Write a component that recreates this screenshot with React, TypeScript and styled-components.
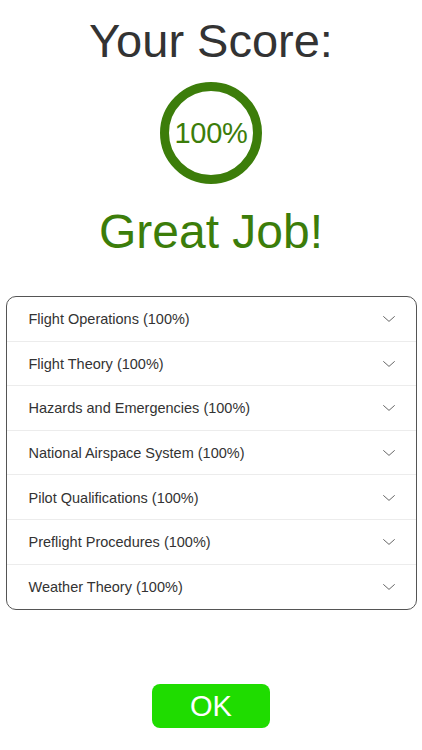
import styled, { createGlobalStyle } from "styled-components";

const GREEN = "#3c7d0a";

const sections = [
  "Flight Operations",
  "Flight Theory",
  "Hazards and Emergencies",
  "National Airspace System",
  "Pilot Qualifications",
  "Preflight Procedures",
  "Weather Theory",
];

const GlobalStyle = createGlobalStyle`
  html, body {
    margin: 0;
    padding: 0;
    background: #ffffff;
    font-family: "Liberation Sans", Arial, Helvetica, sans-serif;
  }
`;

const Chevron = () => (
  <svg width="12" height="6" viewBox="0 0 12 6" fill="none">
    <path d="M0.6 0.6 L6 5.4 L11.4 0.6" stroke="#666" strokeWidth="1" strokeLinecap="round" strokeLinejoin="round" />
  </svg>
);

export default function App() {
  return (
    <Page>
      <GlobalStyle />
      <Title>Your Score:</Title>
      <Ring>
        <RingText>100%</RingText>
      </Ring>
      <Verdict>Great Job!</Verdict>
      <List>
        {sections.map((name, i) => (
          <Row key={name} $last={i === sections.length - 1}>
            <RowLabel>{name} (100%)</RowLabel>
            <Chevron />
          </Row>
        ))}
      </List>
      <OkButton>OK</OkButton>
    </Page>
  );
}

const Page = styled.div`
  width: 422px;
  height: 750px;
  display: flex;
  flex-direction: column;
  align-items: center;
  box-sizing: border-box;
  padding-top: 13px;
`;

const Title = styled.h1`
  margin: 0;
  font-weight: 400;
  font-size: 47px;
  line-height: 56px;
  color: #333333;
`;

const Ring = styled.div`
  margin-top: 13px;
  width: 102px;
  height: 102px;
  box-sizing: border-box;
  border: 9px solid ${GREEN};
  border-radius: 50%;
  display: flex;
  align-items: center;
  justify-content: center;
`;

const RingText = styled.span`
  font-size: 29px;
  color: ${GREEN};
  letter-spacing: -0.3px;
`;

const Verdict = styled.h2`
  margin: 20px 0 0;
  font-weight: 400;
  font-size: 48px;
  line-height: 56px;
  color: ${GREEN};
`;

const List = styled.div`
  margin-top: 36px;
  width: 411px;
  box-sizing: border-box;
  border: 1px solid #555555;
  border-radius: 10px;
  display: flex;
  flex-direction: column;
  overflow: hidden;
`;

const Row = styled.div<{ $last?: boolean }>`
  height: 44.6px;
  box-sizing: border-box;
  display: flex;
  align-items: center;
  justify-content: space-between;
  padding: 1px 21px 0 22px;
  border-bottom: ${(p) => (p.$last ? "none" : "1px solid #ececec")};
`;

const RowLabel = styled.span`
  font-size: 14.5px;
  color: #333333;
`;

const OkButton = styled.button`
  margin-top: 74px;
  width: 118px;
  height: 44px;
  border: none;
  border-radius: 8px;
  background: #1fdc00;
  color: #ffffff;
  font-family: "Liberation Sans", Arial, sans-serif;
  font-size: 29px;
  padding: 0;
  cursor: pointer;
`;
